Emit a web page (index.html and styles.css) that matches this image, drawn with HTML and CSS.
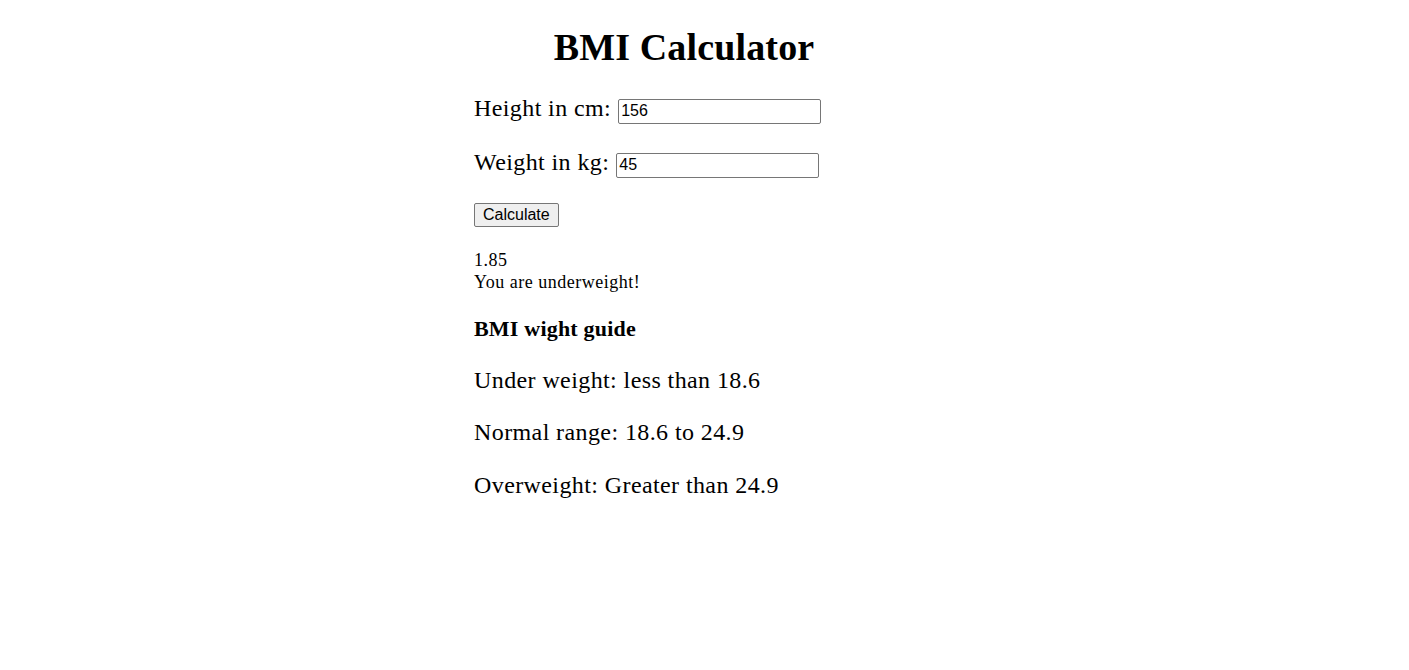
FILE: index.html
```html
<!DOCTYPE html>
<html>
<head>
<meta charset="utf-8">
<title>BMI Calculator</title>
<link rel="stylesheet" href="styles.css">
</head>
<body>
<div class="app">
  <h1 class="title">BMI Calculator</h1>
  <div class="field field-first"><label class="field-label">Height in cm:</label><input class="num" type="text" value="156"></div>
  <div class="field"><label class="field-label">Weight in kg:</label><input class="num" type="text" value="45"></div>
  <div class="actions"><button class="btn">Calculate</button></div>
  <div class="result">
    <div>1.85</div>
    <div>You are underweight!</div>
  </div>
  <h3 class="guide-title">BMI wight guide</h3>
  <p class="guide-item">Under weight: less than 18.6</p>
  <p class="guide-item">Normal range: 18.6 to 24.9</p>
  <p class="guide-item">Overweight: Greater than 24.9</p>
</div>
</body>
</html>
```

FILE: styles.css
```css
html, body {
  margin: 0;
  padding: 0;
  background: #fff;
}
body {
  font-family: "Liberation Serif", "Times New Roman", serif;
  color: #000;
}
.app {
  width: 420px;
  margin-left: 474px;
  padding-top: 25px;
}
.title {
  text-align: center;
  font-size: 38px;
  line-height: 44px;
  letter-spacing: 0.15px;
  font-weight: bold;
  margin: 0;
}
.field {
  display: flex;
  align-items: flex-start;
  gap: 7px;
  height: 25px;
  margin-top: 29px;
}
.field-first {
  margin-top: 30px;
}
.field-label {
  font-size: 24px;
  line-height: 18px;
  letter-spacing: 0.4px;
  white-space: nowrap;
}
.num {
  width: 197px;
  height: 20px;
  margin: 0;
  padding: 1px 2px 2px;
  border: 1px solid #767676;
  border-radius: 2px;
  font-family: "Liberation Sans", Arial, sans-serif;
  font-size: 16px;
  color: #000;
  background: #fff;
  box-sizing: content-box;
}
.actions {
  margin-top: 25px;
  display: flex;
}
.btn {
  height: 24px;
  box-sizing: border-box;
  margin: 0;
  font-family: "Liberation Sans", Arial, sans-serif;
  font-size: 16px;
  line-height: 18px;
  padding: 0 8px;
  border: 1px solid #767676;
  border-radius: 2px;
  background: #efefef;
  color: #000;
}
.result {
  margin-top: 22px;
  font-size: 18px;
  line-height: 22px;
  letter-spacing: 0.5px;
}
.guide-title {
  font-size: 22px;
  line-height: 24px;
  letter-spacing: 0.2px;
  margin: 24px 0 0;
}
.guide-item {
  font-size: 24px;
  line-height: 28px;
  letter-spacing: 0.4px;
  margin: 24.5px 0 0;
}
```
